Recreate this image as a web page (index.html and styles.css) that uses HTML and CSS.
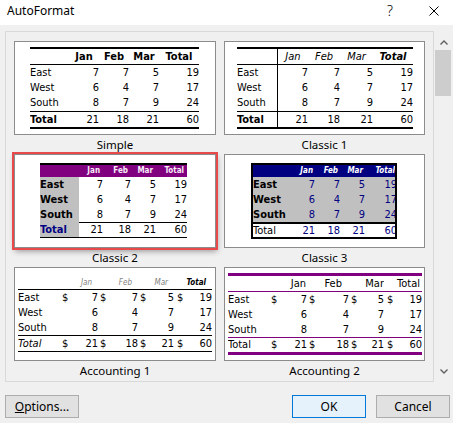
FILE: index.html
```html
<!DOCTYPE html>
<html>
<head>
<meta charset="utf-8">
<title>AutoFormat</title>
<link rel="stylesheet" href="styles.css">
</head>
<body>
<div class="dialog">
  <div class="titlebar">
    <span class="title">AutoFormat</span>
    <span class="help">?</span>
    <svg class="close" width="10" height="10" viewBox="0 0 10 10"><path d="M0.5 0.5 L9.5 9.5 M9.5 0.5 L0.5 9.5" stroke="#000" stroke-width="1" fill="none"/></svg>
  </div>
  <div class="main">
    <div class="listwrap">
      <div class="listbox">
        <div class="grid">
          <!-- Simple -->
          <div class="cell">
            <div class="frame">
              <div class="tbl t-simple">
                <div class="row hdr"><div></div><div>Jan</div><div>Feb</div><div>Mar</div><div>Total</div></div>
                <div class="row"><div>East</div><div class="n">7</div><div class="n">7</div><div class="n">5</div><div class="n">19</div></div>
                <div class="row"><div>West</div><div class="n">6</div><div class="n">4</div><div class="n">7</div><div class="n">17</div></div>
                <div class="row r3"><div>South</div><div class="n">8</div><div class="n">7</div><div class="n">9</div><div class="n">24</div></div>
                <div class="row tot"><div class="lbl">Total</div><div class="n">21</div><div class="n">18</div><div class="n">21</div><div class="n">60</div></div>
              </div>
            </div>
            <div class="caption">Simple</div>
          </div>
          <!-- Classic 1 -->
          <div class="cell">
            <div class="frame">
              <div class="tbl t-c1">
                <div class="row hdr"><div></div><div>Jan</div><div>Feb</div><div>Mar</div><div class="b">Total</div></div>
                <div class="row"><div>East</div><div class="n">7</div><div class="n">7</div><div class="n">5</div><div class="n">19</div></div>
                <div class="row"><div>West</div><div class="n">6</div><div class="n">4</div><div class="n">7</div><div class="n">17</div></div>
                <div class="row r3"><div>South</div><div class="n">8</div><div class="n">7</div><div class="n">9</div><div class="n">24</div></div>
                <div class="row tot"><div class="lbl">Total</div><div class="n">21</div><div class="n">18</div><div class="n">21</div><div class="n">60</div></div>
              </div>
            </div>
            <div class="caption">Classic 1</div>
          </div>
          <!-- Classic 2 -->
          <div class="cell">
            <div class="frame selected">
              <div class="tbl t-c2">
                <div class="row hdr"><div></div><div>Jan</div><div>Feb</div><div>Mar</div><div>Total</div></div>
                <div class="row"><div class="lbl">East</div><div class="n">7</div><div class="n">7</div><div class="n">5</div><div class="n">19</div></div>
                <div class="row"><div class="lbl">West</div><div class="n">6</div><div class="n">4</div><div class="n">7</div><div class="n">17</div></div>
                <div class="row"><div class="lbl">South</div><div class="n">8</div><div class="n">7</div><div class="n">9</div><div class="n">24</div></div>
                <div class="row tot"><div class="lbl">Total</div><div class="n">21</div><div class="n">18</div><div class="n">21</div><div class="n">60</div></div>
              </div>
            </div>
            <div class="caption">Classic 2</div>
          </div>
          <!-- Classic 3 -->
          <div class="cell">
            <div class="frame">
              <div class="tbl t-c3">
                <div class="row hdr"><div></div><div>Jan</div><div>Feb</div><div>Mar</div><div>Total</div></div>
                <div class="row g"><div class="lbl">East</div><div class="n">7</div><div class="n">7</div><div class="n">5</div><div class="n">19</div></div>
                <div class="row g"><div class="lbl">West</div><div class="n">6</div><div class="n">4</div><div class="n">7</div><div class="n">17</div></div>
                <div class="row g"><div class="lbl">South</div><div class="n">8</div><div class="n">7</div><div class="n">9</div><div class="n">24</div></div>
                <div class="row tot"><div class="lbl">Total</div><div class="n">21</div><div class="n">18</div><div class="n">21</div><div class="n">60</div></div>
              </div>
            </div>
            <div class="caption">Classic 3</div>
          </div>
          <!-- Accounting 1 -->
          <div class="cell">
            <div class="frame">
              <div class="tbl t-a1">
                <div class="row hdr"><div></div><div>Jan</div><div>Feb</div><div>Mar</div><div>Total</div></div>
                <div class="row"><div>East</div><div class="acc"><span>$</span><span>7</span></div><div class="acc"><span>$</span><span>7</span></div><div class="acc"><span>$</span><span>5</span></div><div class="acc"><span>$</span><span>19</span></div></div>
                <div class="row"><div>West</div><div class="n">6</div><div class="n">4</div><div class="n">7</div><div class="n">17</div></div>
                <div class="row"><div>South</div><div class="n">8</div><div class="n">7</div><div class="n">9</div><div class="n">24</div></div>
                <div class="row tot"><div class="lbl">Total</div><div class="acc"><span>$</span><span>21</span></div><div class="acc"><span>$</span><span>18</span></div><div class="acc"><span>$</span><span>21</span></div><div class="acc"><span>$</span><span>60</span></div></div>
              </div>
            </div>
            <div class="caption">Accounting 1</div>
          </div>
          <!-- Accounting 2 -->
          <div class="cell">
            <div class="frame">
              <div class="tbl t-a2">
                <div class="row hdr"><div></div><div>Jan</div><div>Feb</div><div>Mar</div><div>Total</div></div>
                <div class="row"><div>East</div><div class="acc"><span>$</span><span>7</span></div><div class="acc"><span>$</span><span>7</span></div><div class="acc"><span>$</span><span>5</span></div><div class="acc"><span>$</span><span>19</span></div></div>
                <div class="row"><div>West</div><div class="n">6</div><div class="n">4</div><div class="n">7</div><div class="n">17</div></div>
                <div class="row"><div>South</div><div class="n">8</div><div class="n">7</div><div class="n">9</div><div class="n">24</div></div>
                <div class="row tot"><div class="lbl">Total</div><div class="acc"><span>$</span><span>21</span></div><div class="acc"><span>$</span><span>18</span></div><div class="acc"><span>$</span><span>21</span></div><div class="acc"><span>$</span><span>60</span></div></div>
              </div>
            </div>
            <div class="caption">Accounting 2</div>
          </div>
        </div>
      </div>
      <div class="scrollbar">
        <div class="arrow up"><svg width="8" height="5" viewBox="0 0 8 5"><path d="M0.5 4.5 L4 1 L7.5 4.5" stroke="#606060" stroke-width="1.4" fill="none"/></svg></div>
        <div class="thumb"></div>
        <div class="arrow down"><svg width="8" height="5" viewBox="0 0 8 5"><path d="M0.5 0.5 L4 4 L7.5 0.5" stroke="#606060" stroke-width="1.4" fill="none"/></svg></div>
      </div>
    </div>
    <div class="buttons">
      <button class="btn"><u>O</u>ptions...</button>
      <button class="btn primary">OK</button>
      <button class="btn">Cancel</button>
    </div>
  </div>
</div>
</body>
</html>
```
FILE: styles.css
```css
* { box-sizing: border-box; }
html, body { margin: 0; padding: 0; }
body {
  background: #f0f0f0;
  font-family: "Noto Sans", "Liberation Sans", sans-serif;
  color: #000;
}
.dialog { width: 453px; height: 423px; overflow: hidden; }

/* title bar */
.titlebar {
  height: 25px;
  background: #fff;
  display: flex;
  align-items: flex-start;
}
.title { padding-left: 7px; font-size: 12px; line-height: 21px; }
.help {
  margin-left: auto;
  width: 10px;
  text-align: center;
  font-size: 14px;
  font-weight: 300;
  line-height: 21px;
  margin-right: 34px;
}
.close { margin-top: 6px; margin-right: 14px; }

/* main */
.main { padding: 6px 0 0 5px; }
.listwrap { display: flex; height: 351px; }
.listbox {
  width: 429px;
  height: 351px;
  border: 1px solid #d9d9d9;
  padding: 9px 0 0 8px;
  overflow: hidden;
}
.grid {
  display: grid;
  grid-template-columns: 202px 201px;
  column-gap: 8px;
  grid-auto-rows: 113px;
}
.frame {
  height: 94px;
  background: #fff;
  border: 1px solid #8c8c8c;
}
.frame.selected {
  outline: 2px solid #e8494b;
  box-shadow: 1px 3px 6px rgba(0, 0, 0, 0.4);
}
.caption {
  height: 19px;
  line-height: 19px;
  text-align: center;
  font-size: 11.5px;
}

/* scrollbar */
.scrollbar { width: 19px; height: 351px; display: flex; flex-direction: column; }
.arrow { height: 18px; display: flex; justify-content: center; }
.arrow.up { align-items: flex-end; padding-bottom: 4px; }
.arrow.down { margin-top: auto; align-items: flex-start; padding-top: 7px; height: 20px; }
.thumb { margin: 1px 2px 0 1px; height: 46px; background: #cdcdcd; }

/* buttons */
.buttons { display: flex; margin-top: 13px; padding-right: 3px; }
.btn {
  width: 74px;
  height: 23px;
  background: #e1e1e1;
  border: 1px solid #adadad;
  font-family: "Noto Sans", "Liberation Sans", sans-serif;
  font-size: 12px;
  color: #000;
  padding: 0;
  line-height: 20px;
}
.btn u { text-decoration: underline; }
.btn.primary {
  margin-left: auto;
  margin-right: 10px;
  background: #e5f1fb;
  border-color: #0078d7;
}

/* preview tables */
.tbl {
  font-family: "DejaVu Sans Condensed", "DejaVu Sans", "Liberation Sans", sans-serif;
  font-stretch: condensed;
  font-size: 11px;
  color: #000;
}
.row {
  display: grid;
  grid-template-columns: var(--cols);
  height: 15px;
  line-height: 15px;
}
.row > div { white-space: nowrap; overflow: hidden; }
.n { text-align: right; }
.acc { display: flex; justify-content: space-between; padding-left: 2px; }
.acc:last-child { padding-left: 3px; }

/* Simple */
.t-simple {
  --cols: 39px 30px 30px 30px 40px;
  width: 169px;
  margin: 5px 0 0 15px;
  border-top: 2px solid #000;
  border-bottom: 2px solid #000;
}
.t-simple .hdr, .t-c1 .hdr {
  height: 16px;
  font-weight: bold;
  text-align: center;
  border-bottom: 1px solid #000;
}
.t-simple .r3, .t-c1 .r3 { height: 16px; line-height: 16px; }
.t-simple .tot, .t-c1 .tot { height: 16px; border-top: 1px solid #000; }
.t-simple .lbl, .t-c1 .lbl { font-weight: bold; }

/* Classic 1 */
.t-c1 {
  --cols: 41px 30px 32px 33px 40px;
  width: 176px;
  margin: 5px 0 0 12px;
  border-top: 2px solid #000;
  border-bottom: 2px solid #000;
}
.t-c1 .row > div:first-child { border-right: 1px solid #000; }
.t-c1 .hdr { font-weight: normal; font-style: italic; }
.t-c1 .hdr .b { font-weight: bold; }

/* Classic 2 */
.t-c2 {
  --cols: 39px 24px 28px 25px 31px;
  width: 147px;
  margin: 8px 0 0 25px;
  border-top: 2px solid #000;
  border-bottom: 1px solid #000;
}
.t-c2 .hdr {
  height: 12px;
  line-height: 12px;
  background: #800080;
  color: #f8eef8;
  font-weight: bold;
  font-size: 8px;
  text-align: right;
}
.t-c2 .hdr > div { padding-right: 3px; }
.t-c2 .lbl { background: #c0c0c0; font-weight: bold; }
.t-c2 .tot .n { border-top: 1px solid #000; line-height: 14px; }
.t-c2 .tot .lbl { color: #000080; }

/* Classic 3 */
.t-c3 {
  --cols: 39px 23px 25px 25px 32px;
  width: 146px;
  margin: 8px 0 0 26px;
  border: 2px solid #000;
  overflow: hidden;
}
.t-c3 .row { width: 144px; }
.t-c3 .hdr {
  height: 12px;
  line-height: 12px;
  background: #000080;
  color: #fff;
  font-weight: bold;
  font-style: italic;
  font-size: 8px;
  text-align: right;
}
.t-c3 .hdr > div { padding-right: 2px; }
.t-c3 .g { background: #c0c0c0; }
.t-c3 .g .lbl { font-weight: bold; }
.t-c3 .n { color: #000080; }
.t-c3 .tot { height: 15px; line-height: 13px; border-top: 2px solid #000; background: #fff; }

/* Accounting 1 */
.t-a1 {
  --cols: 42px 38px 40px 36px 38px;
  width: 194px;
  margin: 8px 0 0 3px;
}
.t-a1 .hdr {
  height: 14px;
  line-height: 14px;
  font-size: 8px;
  font-style: italic;
  color: #808080;
  text-align: right;
  border-bottom: 1px solid #000;
}
.t-a1 .hdr > div { padding-right: 6px; }
.t-a1 .hdr > div:last-child { color: #000; font-weight: bold; }
.t-a1 .tot { height: 17px; border-top: 1px solid #000; border-bottom: 1px solid #000; }
.t-a1 .tot .lbl { font-style: italic; }

/* Accounting 2 */
.t-a2 {
  --cols: 41px 38px 42px 35px 38px;
  width: 194px;
  margin: 5px 0 0 3px;
  border-top: 3px solid #800080;
  border-bottom: 3px solid #800080;
}
.t-a2 .hdr {
  height: 16px;
  line-height: 15px;
  text-align: right;
  border-bottom: 1px solid #800080;
}
.t-a2 .hdr > div { padding-right: 1px; }
.t-a2 .hdr > div:nth-child(3) { padding-right: 7px; }
.t-a2 .hdr > div:nth-child(4) { padding-right: 0; }
.t-a2 .hdr > div:nth-child(5) { padding-right: 2px; }
.t-a2 .tot { height: 15px; line-height: 14px; border-top: 1px solid #800080; }
```
